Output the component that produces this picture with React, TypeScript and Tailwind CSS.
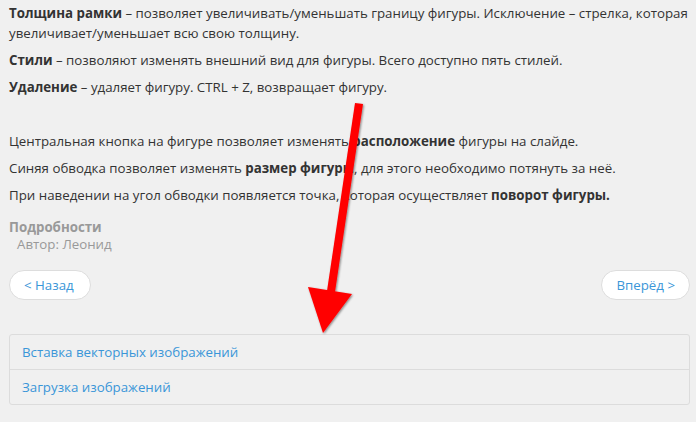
export default function App() {
  return (
    <div className="relative w-[696px] h-[422px] overflow-hidden bg-[#f0f0f0] text-[#333] text-[13.3px] leading-[20px] [font-family:'Open_Sans',sans-serif]">
      <div className="pl-[9px] pr-[6px] pt-[3px]">
        <p className="mb-[7px]">
          <b>Толщина рамки</b> – позволяет увеличивать/уменьшать границу фигуры. Исключение – стрелка, которая увеличивает/уменьшает всю свою толщину.
        </p>
        <p className="mb-[7px]">
          <b>Стили</b> – позволяют изменять внешний вид для фигуры. Всего доступно пять стилей.
        </p>
        <p className="mb-[7px]">
          <b>Удаление</b> – удаляет фигуру. CTRL + Z, возвращает фигуру.
        </p>
        <p className="mb-[7px]">&nbsp;</p>
        <p className="mb-[7px]">
          Центральная кнопка на фигуре позволяет изменять <b>расположение</b> фигуры на слайде.
        </p>
        <p className="mb-[7px]">
          Синяя обводка позволяет изменять <b>размер фигуры</b>, для этого необходимо потянуть за неё.
        </p>
        <p className="mb-[7px]">
          При наведении на угол обводки появляется точка, которая осуществляет <b>поворот фигуры.</b>
        </p>

        <div className="mt-[12px] font-bold text-[#999]">Подробности</div>
        <div className="pl-[8px] text-[#999] leading-[14px]">Автор: Леонид</div>

        <div className="flex justify-between mt-[19px]">
          <button className="h-[30px] pl-[14px] pr-[16px] rounded-full bg-white border border-[#ddd] text-[#3a96d8]">&lt; Назад</button>
          <button className="h-[30px] px-[14px] rounded-full bg-white border border-[#ddd] text-[#3a96d8]">Вперёд &gt;</button>
        </div>

        <div className="mt-[34px] border border-[#dcdcdc] rounded-[3px]">
          <div className="h-[35px] flex items-center px-[12px] border-b border-[#dcdcdc] text-[#3a96d8]">Вставка векторных изображений</div>
          <div className="h-[34px] flex items-center px-[12px] text-[#3a96d8]">Загрузка изображений</div>
        </div>
      </div>

      <svg className="absolute left-0 top-0 pointer-events-none" width="696" height="422" viewBox="0 0 696 422">
        <defs>
          <filter id="sh" x="-20%" y="-20%" width="140%" height="140%">
            <feDropShadow dx="1" dy="1" stdDeviation="1" floodColor="#000" floodOpacity="0.45" />
          </filter>
        </defs>
        <g filter="url(#sh)" fill="#ff0000">
          <polygon points="355,103 363,104 335,292 327,291" />
          <polygon points="308,287 352,294 323,333" />
        </g>
      </svg>
    </div>
  )
}
